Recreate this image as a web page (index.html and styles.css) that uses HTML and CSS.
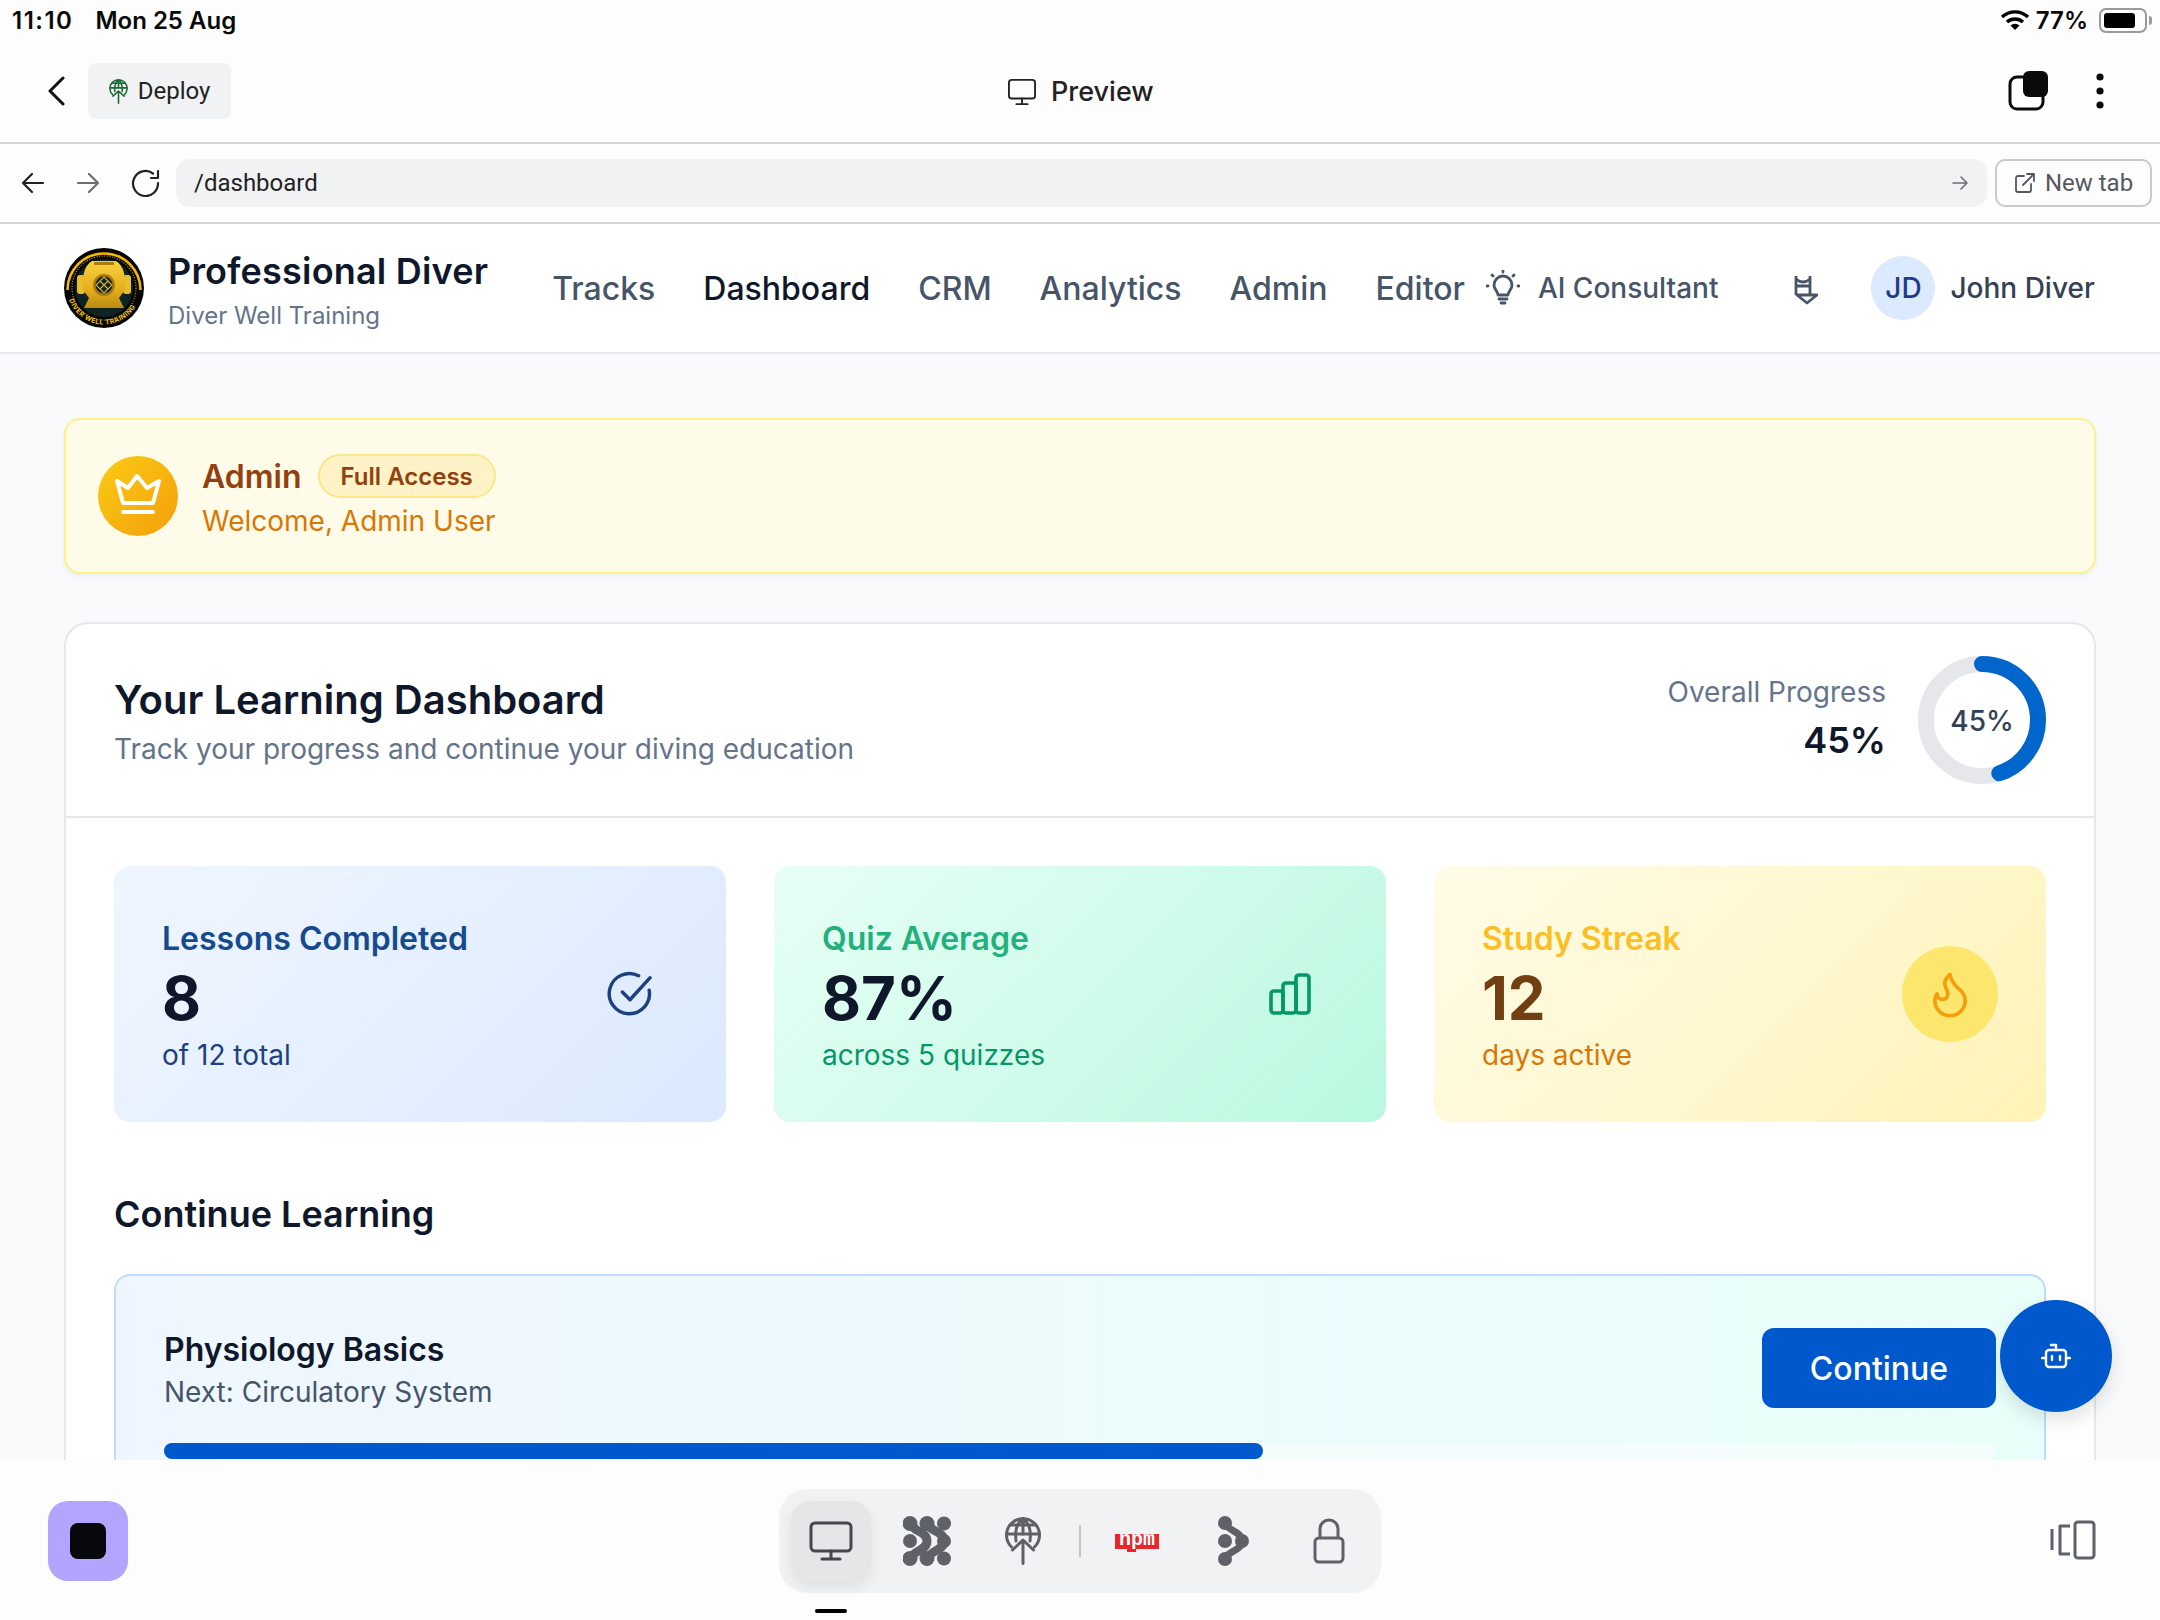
FILE: index.html
```html
<!DOCTYPE html>
<html lang="en">
<head>
  <meta charset="UTF-8">
  <title>Professional Diver - Dashboard</title>
  <link rel="stylesheet" href="styles.css">
</head>
<body>
  <svg class="defs" width="0" height="0">
    <symbol id="globe-up" viewBox="0 0 36 48">
      <g fill="none" stroke="currentColor" stroke-width="3" stroke-linecap="round" stroke-linejoin="round">
        <path d="M6.5 30 A16.5 16.5 0 1 1 29.5 30"/>
        <path d="M1.5 17 H34.5 M5 8 H31"/>
        <path d="M18 1.5 C11 7 10 14 11 24 M18 1.5 C25 7 26 14 25 24 M18 1.5 V17"/>
        <path d="M18 46.5 V23 M7.5 33 L18 23 L28.5 33"/>
      </g>
    </symbol>
    <linearGradient id="gold" x1="0" y1="0" x2="0" y2="1">
      <stop offset="0" stop-color="#f7d23e"/>
      <stop offset="0.6" stop-color="#e5ae1b"/>
      <stop offset="1" stop-color="#b98a14"/>
    </linearGradient>
  </svg>

  <!-- status bar -->
  <div class="status-bar">
    <div class="status-left"><span class="status-time">11:10</span><span>Mon 25 Aug</span></div>
    <div class="status-right">
      <svg width="30" height="22" viewBox="0 0 30 22"><path d="M2 8 A19 19 0 0 1 28 8" fill="none" stroke="#000" stroke-width="3.4"/><path d="M7 13 A12 12 0 0 1 23 13" fill="none" stroke="#000" stroke-width="3.4"/><path d="M15 21 L10.5 16.5 A6.5 6.5 0 0 1 19.5 16.5 Z"/></svg>
      <span>77%</span>
      <div class="battery"><div class="battery-fill"></div></div>
      <div class="battery-tip"></div>
    </div>
  </div>

  <!-- top bar -->
  <div class="top-bar">
    <div class="top-left">
      <svg class="chevron" width="20" height="30" viewBox="0 0 20 30"><path d="M16 2 L3 15 L16 28" fill="none" stroke="#111" stroke-width="3" stroke-linecap="round" stroke-linejoin="round"/></svg>
      <div class="deploy-btn">
        <svg class="deploy-icon" width="19" height="25"><use href="#globe-up"/></svg>
        <span>Deploy</span>
      </div>
    </div>
    <div class="preview-title">
      <svg width="30" height="28" viewBox="0 0 32 30" fill="none" stroke="#222" stroke-width="2" stroke-linecap="round" stroke-linejoin="round"><rect x="2" y="2" width="28" height="20" rx="3"/><path d="M16 22 V28 M10 28 H22"/></svg>
      <span>Preview</span>
    </div>
    <div class="top-right">
      <svg width="40" height="40" viewBox="0 0 40 40"><rect x="2" y="6" width="33" height="32" rx="7" fill="none" stroke="#0a0a0a" stroke-width="3"/><rect x="15" y="0" width="25" height="26" rx="6" fill="#0a0a0a"/></svg>
      <svg width="10" height="38" viewBox="0 0 10 38" fill="#0a0a0a"><circle cx="5" cy="5" r="3.6"/><circle cx="5" cy="19" r="3.6"/><circle cx="5" cy="33" r="3.6"/></svg>
    </div>
  </div>

  <!-- url bar -->
  <div class="url-bar">
    <svg width="24" height="22" viewBox="0 0 24 22" fill="none" stroke="#222" stroke-width="2.2" stroke-linecap="round" stroke-linejoin="round"><path d="M22 11 H2 M11 2 L2 11 L11 20"/></svg>
    <svg width="24" height="22" viewBox="0 0 24 22" fill="none" stroke="#6b6e75" stroke-width="2.2" stroke-linecap="round" stroke-linejoin="round"><path d="M2 11 H22 M13 2 L22 11 L13 20"/></svg>
    <svg width="30" height="28" viewBox="0 0 30 28" fill="none" stroke="#222" stroke-width="2.2" stroke-linecap="round" stroke-linejoin="round"><path d="M27 14 A12.5 12.5 0 1 1 22 4.5"/><path d="M27 2 V9 H20"/></svg>
    <div class="url-field">
      <span>/dashboard</span>
      <svg width="18" height="16" viewBox="0 0 18 16" fill="none" stroke="#6b6e75" stroke-width="1.6" stroke-linecap="round" stroke-linejoin="round"><path d="M2 8 H16 M10 2 L16 8 L10 14"/></svg>
    </div>
    <div class="new-tab">
      <svg width="22" height="22" viewBox="0 0 22 22" fill="none" stroke="#55585f" stroke-width="1.8" stroke-linecap="round" stroke-linejoin="round"><path d="M10 4 H4 A2 2 0 0 0 2 6 V18 A2 2 0 0 0 4 20 H15 A2 2 0 0 0 17 18 V12"/><path d="M9 13 L20 2 M13 2 H20 V9"/></svg>
      <span>New tab</span>
    </div>
  </div>

  <!-- app -->
  <div class="app">
    <header class="app-header">
      <svg class="logo" width="80" height="80" viewBox="0 0 80 80">
        <circle cx="40" cy="40" r="40" fill="#050505"/>
        <path d="M3.5 42 A36.5 36.5 0 0 1 76.5 42" fill="none" stroke="#f5b800" stroke-width="2.6"/>
        <circle cx="40" cy="40" r="32" fill="none" stroke="#c9a227" stroke-width="1.2" stroke-dasharray="1 1.6"/>
        <circle cx="40" cy="40" r="29" fill="#0f2320"/>
        <rect x="13" y="27" width="8" height="19" rx="3" fill="#e9bd30"/>
        <rect x="59" y="27" width="8" height="19" rx="3" fill="#e9bd30"/>
        <path d="M28 13 H52 C60 18 62 28 61 42 L55 50 L60 60 H20 L25 50 L19 42 C18 28 20 18 28 13 Z" fill="url(#gold)"/>
        <rect x="30" y="14" width="20" height="3" rx="1" fill="#a87a10"/>
        <circle cx="40" cy="37" r="11" fill="#a87a10"/>
        <circle cx="40" cy="37" r="8.5" fill="#0f2320"/>
        <path d="M40 29 L48 37 L40 45 L32 37 Z M36 33 L44 41 M44 33 L36 41" fill="none" stroke="#d8b13a" stroke-width="1.1"/>
        <path id="logo-arc" d="M4 48 A37 37 0 0 0 76 48" fill="none"/>
        <text class="logo-text"><textPath href="#logo-arc" startOffset="4">DIVER WELL TRAINING</textPath></text>
      </svg>
      <div class="brand">
        <div class="brand-name">Professional Diver</div>
        <div class="brand-sub">Diver Well Training</div>
      </div>
      <nav class="nav">
        <a>Tracks</a>
        <a class="active">Dashboard</a>
        <a>CRM</a>
        <a>Analytics</a>
        <a>Admin</a>
        <a>Editor</a>
      </nav>
      <div class="ai-link">
        <svg width="34" height="36" viewBox="0 0 34 36" fill="none" stroke="#475569" stroke-width="2.8" stroke-linecap="round" stroke-linejoin="round"><path d="M12 25 C12 21 8 20 8 15 A9 9 0 0 1 26 15 C26 20 22 21 22 25 Z"/><path d="M13 29 H21 M15 33 H19"/><path d="M17 1 V2 M6 5 L7 6 M28 5 L27 6 M1 16 H2 M32 16 H33"/></svg>
        <span>AI Consultant</span>
      </div>
      <svg class="sort-icon" width="24" height="29" viewBox="0 0 24 29" fill="none" stroke="#475569" stroke-width="2.8" stroke-linejoin="round"><path d="M2 0 V19 M16 0 V19 M2 3 Q9 9 16 3 M2 10 H16 M3 19 H23 L13 27 Z"/></svg>
      <div class="avatar">JD</div>
      <div class="user-name">John Diver</div>
    </header>

    <main class="main">
      <section class="admin-banner">
        <div class="admin-icon">
          <svg width="46" height="46" viewBox="0 0 46 46" fill="none" stroke="#fff" stroke-width="4" stroke-linecap="round" stroke-linejoin="round"><path d="M2 8 L13 15 L22 3 L32 15 L44 8 L38 30 H8 Z"/><path d="M8 39 H38"/></svg>
        </div>
        <div>
          <div class="admin-title"><span>Admin</span><span class="pill">Full Access</span></div>
          <div class="admin-welcome">Welcome, Admin User</div>
        </div>
      </section>

      <section class="panel">
        <div class="panel-head">
          <div class="panel-intro">
            <h1>Your Learning Dashboard</h1>
            <p>Track your progress and continue your diving education</p>
          </div>
          <div class="overall">
            <div class="overall-text">
              <div class="overall-label">Overall Progress</div>
              <div class="overall-value">45%</div>
            </div>
            <div class="ring">
              <svg width="128" height="128" viewBox="0 0 128 128">
                <circle cx="64" cy="64" r="56" fill="none" stroke="#e5e7eb" stroke-width="16"/>
                <circle cx="64" cy="64" r="56" fill="none" stroke="#0066cc" stroke-width="16" stroke-linecap="round" stroke-dasharray="158 352" transform="rotate(-90 64 64)"/>
              </svg>
              <span>45%</span>
            </div>
          </div>
        </div>

        <div class="panel-body">
          <div class="stats">
            <div class="stat stat-blue">
              <div class="stat-text">
                <div class="stat-title">Lessons Completed</div>
                <div class="stat-value">8</div>
                <div class="stat-sub">of 12 total</div>
              </div>
              <div class="stat-icon">
                <svg width="46" height="48" viewBox="0 0 48 48" fill="none" stroke="#1e4080" stroke-width="3.6" stroke-linecap="round" stroke-linejoin="round"><path d="M44 20 A21 21 0 1 1 33 5"/><path d="M16 22 L24 30 L45 7"/></svg>
              </div>
            </div>
            <div class="stat stat-green">
              <div class="stat-text">
                <div class="stat-title">Quiz Average</div>
                <div class="stat-value">87%</div>
                <div class="stat-sub">across 5 quizzes</div>
              </div>
              <div class="stat-icon">
                <svg width="42" height="42" viewBox="0 0 42 42" fill="none" stroke="#059669" stroke-width="3.6" stroke-linejoin="round"><rect x="2" y="18" width="12" height="22" rx="3"/><rect x="14" y="10" width="13" height="30" rx="3"/><rect x="27" y="2" width="13" height="38" rx="3"/></svg>
              </div>
            </div>
            <div class="stat stat-yellow">
              <div class="stat-text">
                <div class="stat-title">Study Streak</div>
                <div class="stat-value">12</div>
                <div class="stat-sub">days active</div>
              </div>
              <div class="stat-icon flame">
                <svg width="52" height="52" viewBox="0 0 24 24" fill="none" stroke="#f59e0b" stroke-width="1.7" stroke-linecap="round" stroke-linejoin="round"><path d="M8.5 14.5A2.5 2.5 0 0 0 11 12c0-1.38-.5-2-1-3-1.07-2.14-.22-4.05 2-6 .5 2.5 2 4.9 4 6.5 2 1.6 3 3.5 3 5.5a7 7 0 1 1-14 0c0-1.15.43-2.29 1-3a2.5 2.5 0 0 0 2.5 2.5z"/></svg>
              </div>
            </div>
          </div>

          <h2>Continue Learning</h2>

          <div class="course">
            <div class="course-row">
              <div class="course-info">
                <div class="course-name">Physiology Basics</div>
                <div class="course-next">Next: Circulatory System</div>
              </div>
              <div class="continue-btn">Continue</div>
            </div>
            <div class="course-track"><div class="course-fill" style="width: 60%"></div></div>
          </div>
        </div>
      </section>
    </main>

    <div class="fab">
      <svg width="30" height="26" viewBox="0 0 30 26" fill="none" stroke="#fff" stroke-width="2.4" stroke-linecap="round" stroke-linejoin="round"><path d="M15 7 V2 H10"/><rect x="5" y="7" width="20" height="17" rx="3"/><path d="M1 15 H4 M26 15 H29 M11 13 V17 M19 13 V17"/></svg>
    </div>
  </div>

  <!-- bottom bar -->
  <div class="bottom-bar">
    <div class="stop-btn"><div class="stop-square"></div></div>
    <div class="dock">
      <div class="dock-item active">
        <svg width="44" height="40" viewBox="0 0 44 40" fill="none" stroke="#45474d" stroke-width="3" stroke-linecap="round" stroke-linejoin="round"><rect x="2" y="2" width="40" height="28" rx="4"/><path d="M22 30 V38 M13 38 H31"/></svg>
      </div>
      <div class="dock-item">
        <svg width="48" height="50" viewBox="0 0 48 50" fill="#5f6168"><circle cx="7" cy="7.5" r="7.5"/><circle cx="24" cy="7.5" r="7.5"/><circle cx="41" cy="7.5" r="7"/><circle cx="7" cy="25" r="7"/><circle cx="41" cy="25" r="7"/><circle cx="7" cy="42.5" r="7.5"/><circle cx="24" cy="42.5" r="7.5"/><circle cx="41" cy="42.5" r="7"/><path d="M7 7 C10 16 24 15 24 25 C24 35 10 34 7 43 M24 7 C27 16 41 15 41 25 C41 35 27 34 24 43" fill="none" stroke="#5f6168" stroke-width="9"/></svg>
      </div>
      <div class="dock-item">
        <svg class="dock-globe" width="36" height="48"><use href="#globe-up"/></svg>
      </div>
      <div class="dock-sep"></div>
      <div class="dock-item"><span class="npm">npm</span></div>
      <div class="dock-item">
        <svg width="32" height="50" viewBox="0 0 32 50" fill="#5f6168"><circle cx="8" cy="7" r="7"/><circle cx="8" cy="25" r="7"/><circle cx="8" cy="43" r="7"/><circle cx="25" cy="25" r="7"/><path d="M8 7 C10 15 25 15 25 25 C25 35 10 35 8 43" fill="none" stroke="#5f6168" stroke-width="7"/></svg>
      </div>
      <div class="dock-item">
        <svg width="32" height="46" viewBox="0 0 32 46" fill="none" stroke="#5f6168" stroke-width="3" stroke-linejoin="round"><rect x="2" y="20" width="28" height="24" rx="4"/><path d="M7 20 V11 A9 9 0 0 1 25 11 V20"/></svg>
      </div>
    </div>
    <div class="device-toggle">
      <svg width="46" height="40" viewBox="0 0 46 40" fill="none" stroke="#5f6168" stroke-width="3" stroke-linejoin="round"><path d="M2 9 V30"/><path d="M20 6 H10 V34 H20" /><rect x="25" y="2" width="19" height="36" rx="3"/></svg>
    </div>
    <div class="home-line"></div>
  </div>
</body>
</html>
```

FILE: styles.css
```css
* {
  box-sizing: border-box;
}

body {
  font-family: Inter, 'Liberation Sans', sans-serif;
  background-color: #fdfdfd;
  color: #0f172a;
  margin: 0;
  width: 2160px;
  height: 1620px;
  overflow: hidden;
  display: flex;
  flex-direction: column;
}

.defs {
  position: absolute;
}

/* status bar */
.status-bar {
  height: 40px;
  padding: 0 8px 0 12px;
  display: flex;
  justify-content: space-between;
  align-items: center;
  font-size: 24px;
  font-weight: 600;
  color: #0a0a0a;
}

.status-left {
  display: flex;
  gap: 22px;
}

.status-time {
  letter-spacing: 1.5px;
}

.status-right {
  display: flex;
  align-items: center;
  gap: 6px;
}

.battery {
  width: 48px;
  height: 25px;
  margin-left: 5px;
  border: 2px solid #9a9a9a;
  border-radius: 7px;
  padding: 3px;
}

.battery-fill {
  width: 31px;
  height: 100%;
  background-color: #000;
  border-radius: 3px;
}

.battery-tip {
  width: 3px;
  height: 9px;
  margin-left: -4px;
  background-color: #9a9a9a;
  border-radius: 0 3px 3px 0;
}

/* top bar */
.top-bar {
  height: 104px;
  padding: 0 55px 0 47px;
  display: flex;
  align-items: center;
  justify-content: space-between;
  position: relative;
  border-bottom: 2px solid #d4d4d4;
}

.top-left {
  display: flex;
  align-items: center;
  gap: 21px;
}

.deploy-btn {
  width: 143px;
  height: 56px;
  background-color: #f1f2f4;
  border-radius: 8px;
  display: flex;
  align-items: center;
  justify-content: center;
  gap: 10px;
  font-family: Roboto, sans-serif;
  font-size: 24px;
  color: #222;
}

.deploy-icon {
  color: #1b6b32;
}

.preview-title {
  position: absolute;
  left: 1007px;
  top: 35px;
  display: flex;
  align-items: center;
  gap: 14px;
  font-size: 27px;
  font-weight: 500;
  color: #222;
}

.top-right {
  display: flex;
  align-items: center;
  gap: 47px;
}

/* url bar */
.url-bar {
  height: 80px;
  padding: 0 8px 0 21px;
  display: flex;
  align-items: center;
  gap: 31px;
  border-bottom: 2px solid #d4d4d4;
}

.url-field {
  flex: 1;
  height: 48px;
  margin-left: -16px;
  padding: 0 18px;
  background-color: #f1f2f4;
  border-radius: 14px;
  display: flex;
  align-items: center;
  justify-content: space-between;
  font-family: Roboto, sans-serif;
  font-size: 24px;
  color: #222;
}

.new-tab {
  width: 157px;
  height: 48px;
  margin-left: -23px;
  border: 2px solid #c8cacd;
  border-radius: 10px;
  display: flex;
  align-items: center;
  justify-content: center;
  gap: 9px;
  font-family: Roboto, sans-serif;
  font-size: 24px;
  color: #55585f;
}

/* app */
.app {
  flex: 1;
  position: relative;
  overflow: hidden;
  background-color: #f8fafc;
}

.app-header {
  height: 130px;
  padding: 0 64px;
  background-color: #fff;
  border-bottom: 2px solid #e5e7eb;
  display: flex;
  align-items: center;
  white-space: nowrap;
}

.logo {
  flex-shrink: 0;
}

.logo-text {
  font-size: 6.6px;
  font-weight: 700;
  letter-spacing: 0.5px;
  fill: #f5c518;
}

.brand {
  margin-left: 24px;
  padding-top: 4px;
  flex-shrink: 0;
}

.brand-name {
  font-size: 36px;
  font-weight: 600;
  color: #0f172a;
  line-height: 46px;
  letter-spacing: 0.2px;
}

.brand-sub {
  font-size: 24px;
  color: #64748b;
  line-height: 34px;
  margin-top: 5px;
}

.nav {
  display: flex;
  gap: 48px;
  margin-left: 64px;
  font-size: 32px;
  font-weight: 500;
  color: #475569;
  flex-shrink: 0;
}

.nav .active {
  color: #0f172a;
}

.ai-link {
  display: flex;
  align-items: center;
  gap: 18px;
  margin-left: 21px;
  font-size: 28px;
  font-weight: 500;
  color: #475569;
  flex-shrink: 0;
}

.sort-icon {
  margin-left: 76px;
  margin-top: 5px;
  flex-shrink: 0;
}

.avatar {
  width: 64px;
  height: 64px;
  margin-left: 53px;
  border-radius: 50%;
  background-color: #dbeafe;
  color: #1e3a8a;
  font-size: 28px;
  font-weight: 500;
  display: flex;
  align-items: center;
  justify-content: center;
  flex-shrink: 0;
}

.user-name {
  margin-left: 15px;
  font-size: 28px;
  font-weight: 500;
  color: #334155;
}

.main {
  padding: 64px 64px 0;
}

.admin-banner {
  height: 156px;
  padding: 0 32px;
  margin-bottom: 48px;
  background-color: #fefce8;
  border: 2px solid #fef08a;
  border-radius: 16px;
  box-shadow: 0 2px 6px rgba(0, 0, 0, 0.05);
  display: flex;
  align-items: center;
  gap: 24px;
}

.admin-icon {
  width: 80px;
  height: 80px;
  border-radius: 50%;
  background: linear-gradient(135deg, #facc15, #f59e0b);
  display: flex;
  align-items: center;
  justify-content: center;
}

.admin-title {
  display: flex;
  align-items: center;
  gap: 16px;
  font-size: 32px;
  font-weight: 600;
  color: #92400e;
}

.pill {
  padding: 0 21px;
  height: 44px;
  display: flex;
  align-items: center;
  font-size: 24px;
  background-color: #fef3c7;
  border: 2px solid #fde68a;
  border-radius: 22px;
}

.admin-welcome {
  font-size: 28px;
  color: #d97706;
  margin-top: 6px;
}

.panel {
  height: 1000px;
  background-color: #fff;
  border: 2px solid #e5e7eb;
  border-radius: 24px;
}

.panel-head {
  height: 194px;
  padding: 0 48px;
  border-bottom: 2px solid #e5e7eb;
  display: flex;
  align-items: center;
  justify-content: space-between;
}

.panel-intro {
  padding-top: 4px;
}

h1 {
  margin: 0;
  font-size: 40px;
  font-weight: 600;
  line-height: 48px;
}

.panel-head p {
  margin: 5px 0 0;
  font-size: 28px;
  line-height: 40px;
  color: #64748b;
}

.overall {
  display: flex;
  align-items: center;
  gap: 32px;
}

.overall-text {
  text-align: right;
  padding-bottom: 3px;
}

.overall-label {
  font-size: 28px;
  line-height: 40px;
  color: #64748b;
  margin-bottom: 3px;
}

.overall-value {
  font-size: 36px;
  font-weight: 600;
  line-height: 50px;
}

.ring {
  width: 128px;
  height: 128px;
  padding-top: 2px;
  position: relative;
  display: flex;
  align-items: center;
  justify-content: center;
  font-size: 28px;
  font-weight: 500;
  color: #334155;
}

.ring svg {
  position: absolute;
  top: 0;
  left: 0;
}

.panel-body {
  padding: 48px;
}

.stats {
  display: grid;
  grid-template-columns: repeat(3, 1fr);
  gap: 48px;
}

.stat {
  height: 256px;
  padding: 0 48px;
  border-radius: 16px;
  display: flex;
  align-items: center;
  justify-content: space-between;
}

.stat-text {
  padding-top: 3px;
}

.stat-title {
  font-size: 32px;
  font-weight: 600;
  line-height: 44px;
}

.stat-value {
  font-size: 60px;
  font-weight: 700;
  line-height: 72px;
  margin: 1px 0;
  color: #0f172a;
}

.stat-sub {
  font-size: 28px;
  line-height: 40px;
}

.stat-icon {
  width: 96px;
  height: 96px;
  display: flex;
  align-items: center;
  justify-content: center;
}

.stat-blue {
  background: linear-gradient(135deg, #eff6ff, #dbe9fd);
}

.stat-blue .stat-title {
  color: #164a8f;
}

.stat-blue .stat-sub {
  color: #1e4080;
}

.stat-green {
  background: linear-gradient(135deg, #e8fff6, #b9f8df);
}

.stat-green .stat-title {
  color: #22b07d;
}

.stat-green .stat-sub {
  color: #059669;
}

.stat-yellow {
  background: linear-gradient(135deg, #fffce8, #fff3b8);
}

.stat-yellow .stat-title {
  color: #fbbf24;
}

.stat-yellow .stat-value {
  color: #713f12;
}

.stat-yellow .stat-sub {
  color: #d97706;
}

.flame {
  border-radius: 50%;
  background-color: #fde66d;
}

h2 {
  margin: 67px 0 35px;
  font-size: 36px;
  font-weight: 600;
  line-height: 50px;
}

.course {
  height: 300px;
  padding: 52px 48px;
  background: linear-gradient(90deg, #eff6ff, #e9fff9);
  border: 2px solid #bfdbfe;
  border-radius: 16px;
}

.course-row {
  display: flex;
  align-items: center;
  justify-content: space-between;
  height: 80px;
}

.course-info {
  padding-top: 4px;
}

.course-name {
  font-size: 32px;
  font-weight: 600;
  line-height: 44px;
}

.course-next {
  font-size: 28px;
  line-height: 40px;
  color: #475569;
}

.continue-btn {
  width: 234px;
  height: 80px;
  background-color: #0059cc;
  color: #fff;
  border-radius: 12px;
  font-size: 32px;
  font-weight: 500;
  display: flex;
  align-items: center;
  justify-content: center;
}

.course-track {
  height: 16px;
  margin-top: 35px;
  background-color: #f4fdfb;
  border-radius: 8px;
}

.course-fill {
  height: 100%;
  background-color: #0059cc;
  border-radius: 8px;
}

.fab {
  position: absolute;
  left: 2000px;
  top: 1076px;
  width: 112px;
  height: 112px;
  border-radius: 50%;
  background-color: #0059cc;
  box-shadow: 0 8px 20px rgba(0, 0, 0, 0.12);
  display: flex;
  align-items: center;
  justify-content: center;
}

/* bottom bar */
.bottom-bar {
  height: 160px;
  padding: 41px 64px 0 48px;
  position: relative;
  display: flex;
  align-items: flex-start;
  justify-content: space-between;
}

.stop-btn {
  width: 80px;
  height: 80px;
  border-radius: 20px;
  background-color: #b3a4ff;
  display: flex;
  align-items: center;
  justify-content: center;
}

.stop-square {
  width: 36px;
  height: 36px;
  border-radius: 8px;
  background-color: #07090c;
}

.dock {
  position: absolute;
  left: 779px;
  top: 29px;
  width: 602px;
  height: 104px;
  padding: 0 12px;
  background-color: #f1f2f4;
  border-radius: 28px;
  display: flex;
  align-items: center;
  justify-content: space-between;
}

.dock-item {
  width: 80px;
  height: 80px;
  border-radius: 20px;
  display: flex;
  align-items: center;
  justify-content: center;
}

.dock-item.active {
  background-color: #e5e6e8;
  box-shadow: 0 6px 14px rgba(0, 0, 0, 0.08);
}

.dock-globe {
  color: #5f6168;
}

.dock-sep {
  width: 2px;
  height: 32px;
  background-color: #c4c5c8;
}

.npm {
  width: 44px;
  height: 15px;
  position: relative;
  background-color: #e8262b;
  color: #fff;
  font-family: 'Liberation Mono', monospace;
  font-weight: 700;
  font-size: 20px;
  line-height: 12px;
  text-align: center;
}

.npm::after {
  content: "";
  position: absolute;
  left: 12px;
  bottom: -3px;
  width: 9px;
  height: 3px;
  background-color: #e8262b;
}

.device-toggle {
  margin-top: 19px;
}

.home-line {
  position: absolute;
  left: 815px;
  top: 149px;
  width: 32px;
  height: 4px;
  background-color: #000;
  border-radius: 2px;
}
```
